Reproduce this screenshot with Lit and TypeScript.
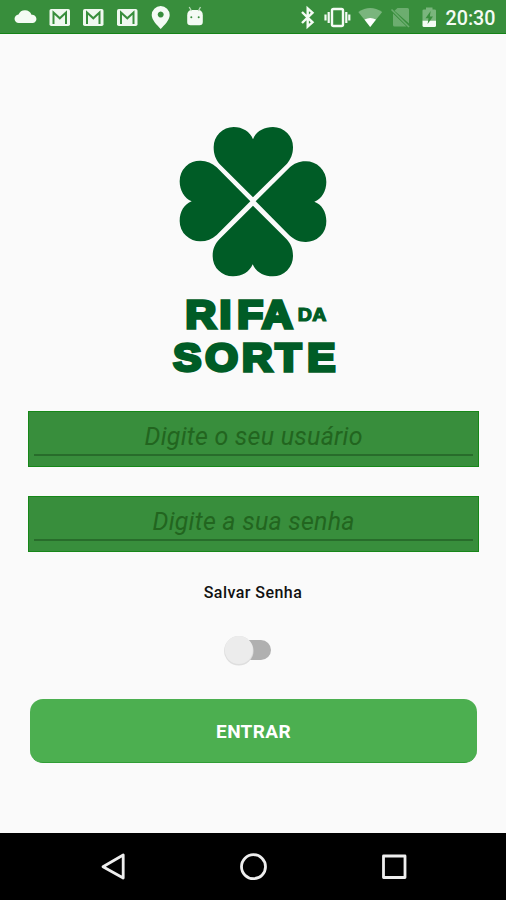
import { LitElement, html, css, svg } from "lit";
import { customElement, property } from "lit/decorators.js";

@customElement("status-bar")
class StatusBar extends LitElement {
  static styles = css`
    :host { display: flex; height: 34px; box-sizing: border-box; background: #388e3c; border-bottom: 1px solid #158317; }
    svg { display: block; width: 506px; height: 33px; }
    .clock { font: 500 20px Roboto, sans-serif; fill: #f4fbf4; }
  `;
  mail(x: number) {
    return svg`<g transform="translate(${x} 0)">
      <rect x="0" y="9" width="20.5" height="17" rx="1.8" fill="#f0f8f0"/>
      <path d="M4 24V12.5L10.3 18.3L16.5 12.5V24" fill="none" stroke="#388e3c" stroke-width="2"/>
    </g>`;
  }
  render() {
    return html`<svg viewBox="0 0 506 33" fill="#f4fbf4">
      <path d="M19 23A4.200 4.200 0 0 1 18.500 14.600A7 7 0 0 1 31.500 14.800A4.100 4.100 0 0 1 33 23Z"/>
      ${[49.5, 83, 117].map((x) => this.mail(x))}
      <path fill-rule="evenodd" d="M160.700 6a9 9 0 0 1 9 9C169.700 20 164.500 25 160.700 29C157 25 151.700 20 151.700 15a9 9 0 0 1 9-9ZM160.700 11.600a3 3 0 1 0 .01 0Z"/>
      <path d="M187.200 15.500Q187.200 10 192 10H198Q202.800 10 202.800 15.500V22Q202.800 25.300 199.500 25.300H190.500Q187.200 25.300 187.200 22Z"/>
      <path d="M189.200 7L191.500 11M200.500 7L198.300 11" stroke="#b8dcb9" stroke-width="1.300"/>
      <circle cx="191.300" cy="17.300" r="1" fill="#388e3c"/><circle cx="198.700" cy="17.300" r="1" fill="#388e3c"/>
      <path d="M302 12L312.500 22.300L307.700 26.500V8.500L312.500 12.700L302 23" fill="none" stroke="#f4fbf4" stroke-width="2.400"/>
      <rect x="332" y="9" width="11" height="17" rx="1.500" fill="none" stroke="#f4fbf4" stroke-width="2.400"/>
      <path d="M328.700 12V23M325.500 14.500V20.500M346.300 12V23M349.300 14.500V20.500" stroke="#f4fbf4" stroke-width="2.200"/>
      <path d="M358.300 12Q370.200 4 382.200 12L370.200 27Z" fill="#7ab57d"/>
      <path d="M364.500 19.600Q370.200 16.500 376 19.600L370.200 27Z" fill="#fff"/>
      <path d="M397.500 8H407.500Q409 8 409 9.500V23.500L394.500 10.800ZM393 13.500L406.500 26.500H394.500Q393 26.500 393 25Z" fill="#6cad6f"/>
      <path d="M391.500 9.500L409 27" stroke="#6cad6f" stroke-width="1.600"/>
      <path d="M422.500 10.500Q422.500 9.500 424 9.500H426V7.500H432.500V9.500H434.500Q436 9.500 436 10.500V21H422.500Z" fill="#7ab57d"/>
      <path d="M422.500 20.700H436V25.500Q436 27 434.500 27H424Q422.500 27 422.500 25.500Z"/>
      <path d="M430.700 11L425.500 18.200H428.500L427.600 24L433 16.500H429.800Z" fill="#388e3c"/>
      <text class="clock" x="445.500" y="25.200" textLength="50" lengthAdjust="spacingAndGlyphs">20:30</text>
    </svg>`;
  }
}

/** Horizontal stretch of the wordmark's letters. */
const STRETCH = 1.1;
const starts = (...xs: number[]) => xs.map((x) => (x / STRETCH).toFixed(2)).join(" ");

@customElement("brand-logo")
class BrandLogo extends LitElement {
  static styles = css`
    :host { display: block; width: 176px; height: 269px; }
    svg { display: block; }
    text { font-family: "Liberation Sans", Arial, sans-serif; font-weight: 700; stroke: #005c26; }
  `;
  render() {
    return html`<svg width="176" height="269" viewBox="0 0 176 269" fill="#005c26">
      <g transform="scale(.33333)">
        <path d="M264 247L163 146C152 133 146 118 146 97A60 60 0 0 1 206 36C232 36 256 50 264 73C272 50 296 36 324 36A60 60 0 0 1 384 97C384 118 377 133 366 146Z"/>
        <path d="M264 272L365 373C377 386 384 401 384 423A60 60 0 0 1 323 484C297 484 272 471 263 448C254 471 230 484 205 484A60 60 0 0 1 143 423C143 403 150 386 163 373Z"/>
        <path d="M256 259L155 360C141 373 125 379 107 379A61 61 0 0 1 44 318C44 290 58 267 80 259C58 250 44 226 44 199A61 61 0 0 1 107 137C125 137 141 144 155 157Z"/>
        <path d="M272 259L373 158C387 146 402 139 421 139A61 61 0 0 1 484 201C484 228 470 252 448 260C470 268 484 290 484 318A61 61 0 0 1 421 381C402 381 387 374 373 361Z"/>
      </g>
      <g transform="scale(${STRETCH} 1)">
        <text x=${starts(20.5, 54.4, 72.3, 97)} y="213.500" font-size="38.500" stroke-width="3.300">RIFA</text>
        <text x=${starts(132.8, 147.2)} y="206.500" font-size="17.800" stroke-width="1.200">DA</text>
        <text x=${starts(8.2, 40.2, 77, 110.5, 142.3)} y="256.300" font-size="38.300" stroke-width="3.300">SORTE</text>
      </g>
    </svg>`;
  }
}

@customElement("login-field")
class LoginField extends LitElement {
  @property() hint = "";
  @property({ type: Number }) span = 218;
  static styles = css`
    :host { display: block; box-sizing: border-box; width: 451px; height: 56px; padding: 0 5px; background: #388e3c; border: 1px solid #168718; }
    .line { height: 42px; border-bottom: 2px solid #286c2b; }
    svg { display: block; width: 439px; height: 42px; }
    text { font: italic 400 25px Roboto, sans-serif; fill: #22651f; }
  `;
  render() {
    return html`<div class="line"><svg viewBox="0 0 439 42">
      <text x="219.500" y="33" text-anchor="middle" textLength=${this.span}>${this.hint}</text>
    </svg></div>`;
  }
}

@customElement("app-root")
class AppRoot extends LitElement {
  static styles = css`
    :host { display: flex; flex-direction: column; width: 506px; height: 900px; background: #fafafa; font-family: Roboto, sans-serif; }
    .content { flex: 1; display: flex; flex-direction: column; align-items: center; }
    brand-logo { margin-top: 81px; }
    .fields { display: flex; flex-direction: column; gap: 29px; margin-top: 27px; margin-left: 1px; }
    .label { margin-top: 31px; font-size: 16px; font-weight: 500; line-height: 20px; color: #111; letter-spacing: .45px; }
    .switch { width: 60px; height: 32px; margin: 31px 0 0; }
    .enter { width: 447px; height: 64px; margin: 33px 0 0 1px; border: 0; border-bottom: 1px solid #309d35; border-radius: 13px; background: #4caf50; color: #fff; font: 700 19px Roboto, sans-serif; letter-spacing: .35px; padding: 2px 0 0; }
    .nav { display: block; height: 67px; background: #000; }
  `;
  render() {
    return html`
      <status-bar></status-bar>
      <div class="content">
        <brand-logo></brand-logo>
        <div class="fields">
          <login-field hint="Digite o seu usuário" span="218"></login-field>
          <login-field hint="Digite a sua senha" span="202"></login-field>
        </div>
        <div class="label">Salvar Senha</div>
        <svg class="switch" viewBox="0 0 60 32">
          <rect x="12" y="6" width="36" height="20" rx="10" fill="#b0b0b0"/>
          <circle cx="15.800" cy="16.800" r="14.700" fill="#dedede"/>
          <circle cx="15.800" cy="16" r="14" fill="#ececec"/>
        </svg>
        <button class="enter">ENTRAR</button>
      </div>
      <svg class="nav" width="506" height="67" viewBox="0 0 506 67" fill="none" stroke="#eee" stroke-width="2.800" stroke-linejoin="round">
        <path d="M123.200 22V45L103 33.700Z"/>
        <circle cx="253.500" cy="33.700" r="12"/>
        <rect x="383.500" y="23" width="21.500" height="21.500"/>
      </svg>`;
  }
}
